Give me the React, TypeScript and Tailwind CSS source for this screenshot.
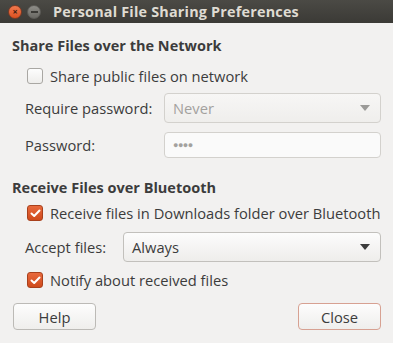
const font = { fontFamily: '"Open Sans", "Noto Sans", sans-serif' };

const Check = ({ checked }: { checked: boolean }) =>
  checked ? (
    <span className="flex h-4 w-4 shrink-0 items-center justify-center rounded-[3px] border border-[#a8401c] bg-gradient-to-b from-[#e8693c] to-[#cf4a1b]">
      <svg width="11" height="9" viewBox="0 0 11 9">
        <path d="M1.5 4.5 L4.2 7 L9.5 1.5" fill="none" stroke="#fff" strokeWidth="2" strokeLinecap="round" strokeLinejoin="round" />
      </svg>
    </span>
  ) : (
    <span className="h-4 w-4 shrink-0 rounded-[3px] border border-[#a9a7a3] bg-gradient-to-b from-[#fdfdfd] to-[#eeedeb]" />
  );

const Arrow = ({ dim }: { dim?: boolean }) => (
  <svg width="10" height="6" viewBox="0 0 10 6">
    <path d="M0 0 L10 0 L5 6 Z" fill={dim ? '#9b9a98' : '#3c3c3c'} />
  </svg>
);

export default function App() {
  return (
    <div className="h-[343px] w-[393px] overflow-hidden bg-[#f2f1f0] text-[14.7px] leading-[20px] text-[#3c3c3c]" style={font}>
      {/* title bar */}
      <div className="flex h-[23px] items-center bg-gradient-to-b from-[#4b4a45] to-[#3b3a36] pl-[8px]">
        <span className="flex h-[14px] w-[14px] items-center justify-center rounded-full border border-[#7a3a25] bg-gradient-to-b from-[#f3794d] to-[#d9501f] text-[9px] font-bold leading-none text-[#3a1a10]">
          ×
        </span>
        <span className="ml-[5px] flex h-[14px] w-[14px] items-center justify-center rounded-full border border-[#5c5b57] bg-gradient-to-b from-[#8e8d88] to-[#6a6964]">
          <span className="h-[2px] w-[7px] bg-[#3b3a36]" />
        </span>
        <span className="ml-[12px] text-[14.4px] font-bold tracking-[0.2px] text-[#dfdbd2]">Personal File Sharing Preferences</span>
      </div>

      <div className="px-[12px]">
        <div className="mt-[13px] text-[14.5px] font-bold">Share Files over the Network</div>
        <div className="mt-[10px] flex items-center gap-[7px] pl-[15px]">
          <Check checked={false} />
          <span>Share public files on network</span>
        </div>
        <div className="mt-[7px] flex items-center pl-[13px]">
          <span className="w-[139px]">Require password:</span>
          <div className="flex h-[30px] flex-1 items-center justify-between rounded-[4px] border border-[#d3d1cd] bg-gradient-to-b from-[#f7f6f5] to-[#efeeec] pl-[8px] pr-[10px] text-[#a3a19e]">
            <span>Never</span>
            <Arrow dim />
          </div>
        </div>
        <div className="mt-[9px] flex items-center pl-[13px]">
          <span className="w-[139px]">Password:</span>
          <div className="flex h-[26px] flex-1 items-center rounded-[4px] border border-[#d3d1cd] bg-[#fafafa] pl-[8px] text-[9px] tracking-[-0.5px] text-[#a3a19e]">
            ●●●●
          </div>
        </div>

        <div className="mt-[20px] text-[14.5px] font-bold">Receive Files over Bluetooth</div>
        <div className="mt-[5px] flex items-center gap-[7px] pl-[15px]">
          <Check checked />
          <span className="whitespace-nowrap">Receive files in Downloads folder over Bluetooth</span>
        </div>
        <div className="mt-[9px] flex items-center pl-[13px]">
          <span className="w-[98px]">Accept files:</span>
          <div className="flex h-[30px] flex-1 items-center justify-between rounded-[4px] border border-[#c2c0bc] bg-gradient-to-b from-[#fcfcfc] to-[#eeedeb] pl-[8px] pr-[10px]">
            <span>Always</span>
            <Arrow />
          </div>
        </div>
        <div className="mt-[8px] flex items-center gap-[7px] pl-[15px]">
          <Check checked />
          <span>Notify about received files</span>
        </div>

        <div className="mt-[13px] flex items-center justify-between pl-[1px]">
          <button className="h-[27px] w-[83px] rounded-[4px] border border-[#bcbab6] bg-gradient-to-b from-[#fdfdfd] to-[#efeeec]">Help</button>
          <button className="h-[27px] w-[83px] rounded-[4px] border border-[#d7a192] bg-gradient-to-b from-[#fdfdfd] to-[#efeeec]">Close</button>
        </div>
      </div>
    </div>
  );
}
